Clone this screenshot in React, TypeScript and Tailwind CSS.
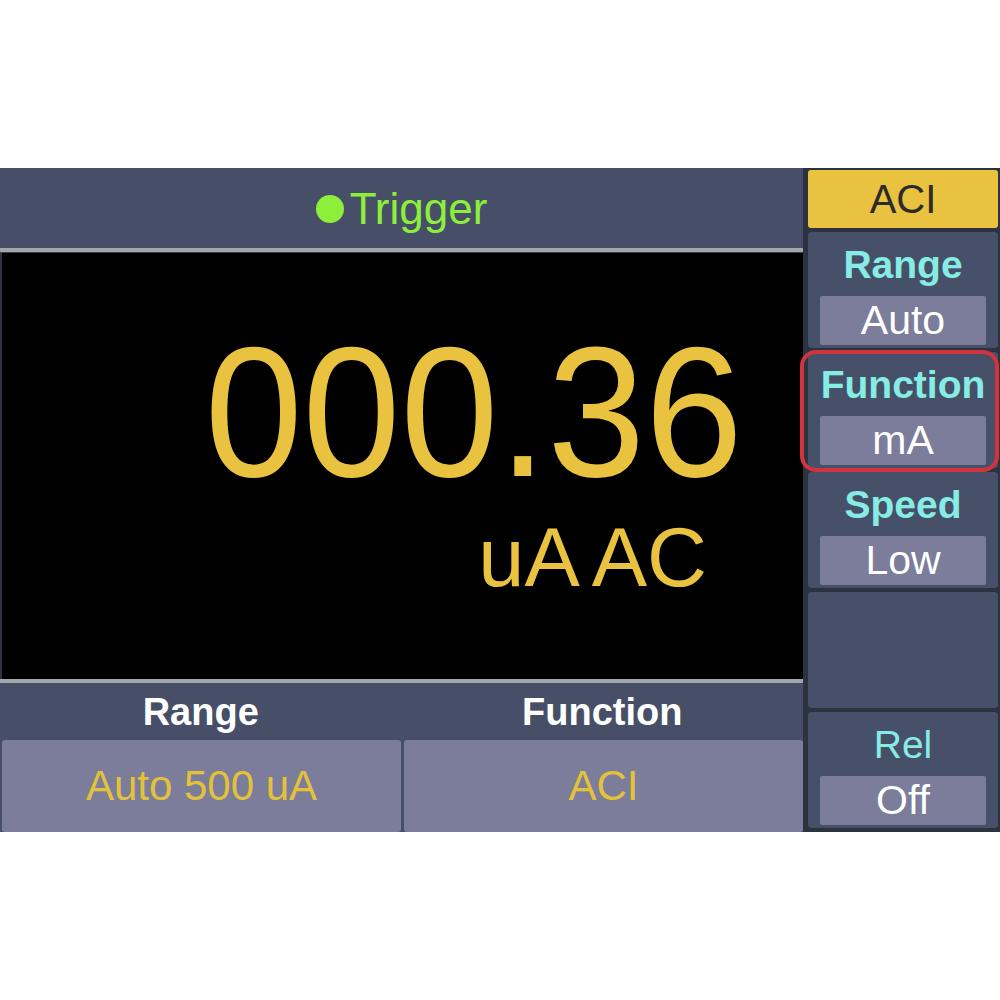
import React from 'react';

const SIDE_BUTTONS = [
  { label: 'Range', value: 'Auto', bold: true },
  { label: 'Function', value: 'mA', bold: true, marked: true },
  { label: 'Speed', value: 'Low', bold: true },
  null,
  { label: 'Rel', value: 'Off', bold: false },
];

function SideButton({ item }: { item: (typeof SIDE_BUTTONS)[number] }) {
  if (!item) {
    return <div className="h-[116px] rounded-[4px] bg-[#465068]" />;
  }
  return (
    <div className="relative flex h-[116px] flex-col rounded-[4px] bg-[#465068]">
      <div
        className={`flex h-[64px] items-center justify-center text-[39px] leading-none text-[#86ece4] ${
          item.bold ? 'font-bold' : ''
        }`}
      >
        {item.label}
      </div>
      <div className="mx-[12px] flex h-[49px] items-center justify-center rounded-[2px] bg-[#7b7d9b] text-[41px] leading-none text-white">
        {item.value}
      </div>
      {item.marked && (
        // red annotation ring drawn over the button
        <div className="absolute -top-[2px] -bottom-[4px] -left-[8px] -right-[1px] z-10 rounded-[16px] border-[4px] border-[#d2343f]" />
      )}
    </div>
  );
}

export default function App() {
  return (
    <div className="min-h-screen bg-white pt-[168px] font-['Liberation_Sans',Arial,sans-serif]">
      <div className="flex h-[664px] w-[1000px] bg-[#2c3240]">
        {/* main display */}
        <div className="flex w-[803px] flex-col">
          <div className="flex h-[80px] items-center justify-center gap-[6px] bg-[#464f67] pt-[2px] text-[44px] leading-none text-[#8def3a]">
            <span className="h-[28px] w-[28px] rounded-full bg-[#8def3a]" />
            <span>Trigger</span>
          </div>
          <div className="h-[4px] bg-[#a3a6ab]" />
          <div className="h-[1px] bg-[#3a3f48]" />
          <div className="ml-[2px] flex flex-1 flex-col items-end bg-black text-[#e9c23f]">
            <div className="mt-[75px] mr-[60px] origin-bottom scale-y-[1.05] text-[176px] leading-none">000.36</div>
            <div className="mt-[12px] mr-[96px] text-[83px] leading-none [word-spacing:-2px]">uA AC</div>
          </div>
          <div className="h-[4px] bg-[#a3a6ab]" />
          <div className="grid h-[57px] grid-cols-2 bg-[#464f67] text-[38px] font-bold leading-none text-white">
            <div className="flex items-center justify-center">Range</div>
            <div className="flex items-center justify-center">Function</div>
          </div>
          <div className="grid h-[92px] grid-cols-2 gap-[3px] bg-[#464f67] pl-[2px] text-[42px] leading-none text-[#e3c23a]">
            <div className="flex items-center justify-center rounded-[3px] bg-[#7b7d9b]">Auto 500 uA</div>
            <div className="flex items-center justify-center rounded-[3px] bg-[#7b7d9b]">ACI</div>
          </div>
        </div>

        {/* soft keys */}
        <div className="flex w-[197px] flex-col gap-[4px] pt-[2px] pr-[2px] pl-[5px]">
          <div className="flex h-[58px] items-center justify-center rounded-[3px] bg-[#e9c23f] text-[40px] leading-none text-[#2b2b2b]">
            ACI
          </div>
          {SIDE_BUTTONS.map((item, i) => (
            <SideButton key={i} item={item} />
          ))}
        </div>
      </div>
    </div>
  );
}
